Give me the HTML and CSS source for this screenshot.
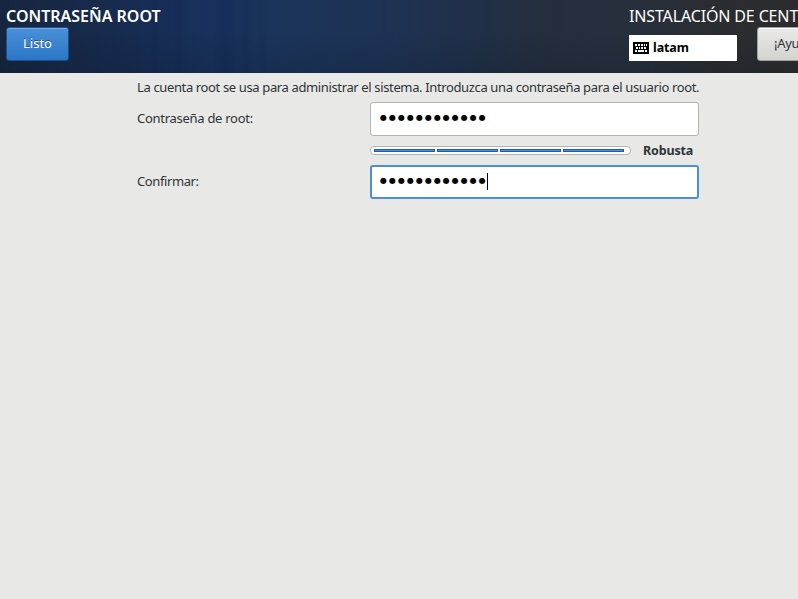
FILE: index.html
```html
<!DOCTYPE html>
<html lang="es">
<head>
<meta charset="utf-8">
<title>Contraseña root</title>
<link rel="stylesheet" href="styles.css">
</head>
<body>
<header class="topbar">
  <div class="left">
    <h1 class="title">CONTRASEÑA ROOT</h1>
    <button class="btn primary">Listo</button>
  </div>
  <div class="right">
    <div class="product">INSTALACIÓN DE CENT</div>
    <div class="actions">
      <div class="layout">
        <svg class="kbd" width="16" height="12" viewBox="0 0 16 12" shape-rendering="crispEdges">
          <rect width="16" height="12" rx="1" fill="#000"/>
          <path fill="#fff" d="M2 2h2v2H2zM5 2h2v2H5zM8 2h2v2H8zM11 2h1v2h-1zM13 2h1v2h-1zM3 5h2v2H3zM6 5h1v2H6zM8 5h2v2H8zM11 5h2v2h-2zM2 8h2v2H2zM5 8h6v2H5zM12 8h2v2h-2z"/>
        </svg>
        <span class="layout-name">latam</span>
      </div>
      <button class="btn help">¡Ayu</button>
    </div>
  </div>
</header>
<main class="form">
  <p class="intro">La cuenta root se usa para administrar el sistema. Introduzca una contraseña para el usuario root.</p>
  <div class="label pw-label">Contraseña de root:</div>
  <div class="entry"><span class="dots">●●●●●●●●●●●●</span></div>
  <div class="strength">
    <div class="meter"><i></i><i></i><i></i><i></i></div>
    <span class="verdict">Robusta</span>
  </div>
  <div class="label confirm-label">Confirmar:</div>
  <div class="entry focused"><span class="dots">●●●●●●●●●●●●</span><span class="caret"></span></div>
</main>
</body>
</html>
```

FILE: styles.css
```css
* { box-sizing: border-box; }
body {
  margin: 0;
  height: 599px;
  overflow: hidden;
  background: #e8e8e6;
  color: #2e3436;
  font: 13px/20px "Noto Sans", "Open Sans", sans-serif;
  white-space: nowrap;
}
.topbar {
  height: 73px;
  display: flex;
  justify-content: space-between;
  padding: 6px 0 0 6px;
  overflow: hidden;
  color: #fff;
  background:
    linear-gradient(90deg, transparent 150px, rgba(3,18,50,.1) 154px, transparent 160px, transparent 174px, rgba(3,18,50,.1) 178px, transparent 183px, transparent 212px, rgba(5,25,70,.16) 222px, rgba(5,25,70,.15) 232px, transparent 238px, rgba(5,25,70,.15) 246px, transparent 254px, rgba(5,25,70,.1) 262px, transparent 268px),
    linear-gradient(180deg, rgba(0,0,0,0) 40%, rgba(5,15,30,.16)),
    linear-gradient(90deg, #17263e 0, #172a4a 90px, #172e58 170px, #19325d 225px, #1b345b 270px, #1d3355 370px, #20304a 460px, #242e3d 550px, #26303d 630px, #2a2d31 710px, #2c2c2c 798px);
}
.title {
  margin: 0;
  font-size: 16px;
  line-height: 21px;
  font-weight: 600;
  letter-spacing: 0;
}
.right { width: 169px; }
.product { font-size: 16px; line-height: 21px; letter-spacing: -.14px; }
.actions { display: flex; align-items: flex-end; gap: 20px; }
.btn {
  display: block;
  height: 34px;
  padding: 0 16px 2px;
  border: 1px solid;
  border-radius: 3px;
  font: 13px/30px "Noto Sans", "Open Sans", sans-serif;
}
.primary {
  width: 63px;
  color: #fff;
  border-color: #1c5187;
  background: linear-gradient(#4a90d9, #2a76c6);
  box-shadow: inset 0 1px #79ade5;
  text-shadow: 0 -1px rgba(0,0,0,.4);
}
.help {
  flex: none;
  width: 82px;
  text-align: left;
  letter-spacing: -.3px;
  color: #2e3436;
  border-color: #a1a1a1;
  background: linear-gradient(#e9e9e7, #d3d3d0);
  box-shadow: inset 0 1px #fff;
}
.layout {
  flex: none;
  width: 108px;
  height: 26px;
  display: flex;
  align-items: center;
  gap: 4px;
  padding-left: 4px;
  background: #fff;
  color: #000;
}
.layout-name { font-weight: 700; font-size: 12.5px; letter-spacing: -.1px; }
.form {
  display: grid;
  grid-template-columns: 233px 329px;
  grid-template-rows: 25px 34px 29px 34px;
  width: 562px;
  margin: 4px 0 0 137px;
}
.intro { grid-column: 1 / 3; margin: 0; letter-spacing: -.365px; }
.label { align-self: center; padding-bottom: 2px; letter-spacing: -.28px; }
.confirm-label { letter-spacing: -.4px; }
.entry {
  grid-column: 2;
  display: flex;
  align-items: center;
  height: 34px;
  padding: 0 0 2px 9px;
  border: 1px solid #b4b4b1;
  border-radius: 3px;
  background: #fff;
  color: #000;
}
.focused { border: 2px solid #4a90d9; padding-left: 8px; }
.dots { font: 8px/20px "DejaVu Sans", sans-serif; letter-spacing: 2px; }
.caret { width: 1px; height: 17px; margin-left: -1px; background: #000; }
.strength { grid-column: 2; display: flex; align-items: center; gap: 12px; }
.meter {
  display: flex;
  gap: 2px;
  width: 261px;
  height: 9px;
  padding: 2px 6px 2px 3px;
  border: 1px solid #b4b4b1;
  border-radius: 4px;
  background: #fff;
}
.meter i { flex: 1; height: 3px; background: #4a90d9; border: 1px solid #1c5fa8; }
.verdict { font-weight: 700; font-size: 12.5px; letter-spacing: -.15px; }
```
